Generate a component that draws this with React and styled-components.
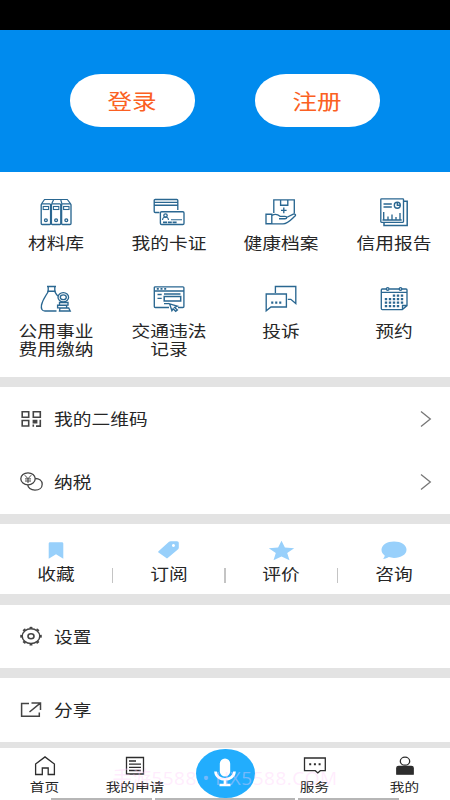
import React from "react";
import styled, { createGlobalStyle } from "styled-components";

const GlobalStyle = createGlobalStyle`
  * {
    box-sizing: border-box;
  }

  body {
    margin: 0;
    background: #fff;
    font-family: "Noto Sans CJK SC", sans-serif;
    color: #262626;
  }
`;

const Page = styled.div`
  display: flex;
  flex-direction: column;
  width: 450px;
  height: 800px;
  overflow: hidden;
  background: #e3e3e3;
`;

const StatusBar = styled.div`
  height: 29.5px;
  flex: none;
  background: #000;
`;

const Header = styled.header`
  display: flex;
  justify-content: center;
  gap: 60px;
  height: 142px;
  flex: none;
  padding-top: 44.5px;
  background: #008bee;
`;

// Wide lettering used all over the page
const Label = styled.span`
  display: inline-block;
  font-size: ${(p) => p.$size || 16}px;
  line-height: ${(p) => p.$line || 18.5}px;
  font-weight: 400;
  white-space: pre;
  text-align: ${(p) => (p.$left ? "left" : "center")};
  transform: scaleX(1.17);
  transform-origin: ${(p) => (p.$left ? "left" : "center")};
`;

const PillButton = styled.button`
  width: 125px;
  height: 52.5px;
  padding: 0 1px 1px 0;
  border: 0;
  border-radius: 31px / 26px;
  background: #fff;
  color: #fb6022;
  font-family: inherit;
`;

const Panel = styled.section`
  flex: none;
  height: ${(p) => p.$height}px;
  margin-bottom: ${(p) => p.$gap || 10.5}px;
  background: #fff;
`;

const ServiceGrid = styled(Panel)`
  display: grid;
  grid-template-columns: repeat(4, 1fr);
  grid-template-rows: 87.5px 1fr;
  padding-top: 25.5px;
`;

const Service = styled.div`
  display: flex;
  flex-direction: column;
  align-items: center;
  gap: 6px;
`;

const Svg = styled.svg`
  display: block;
  flex: none;
  overflow: visible;
  fill: none;
  stroke: ${(p) => p.$color || "#2a6791"};
  stroke-width: ${(p) => p.$stroke || 1.35};
`;

const MenuRow = styled.div`
  display: flex;
  align-items: center;
  height: 63px;
  padding: 0 19px 0 20px;
`;

const MenuIcon = styled.div`
  width: 33.5px;
`;

const Chevron = styled(Svg)`
  margin-left: auto;
`;

const StatRow = styled(Panel)`
  display: grid;
  grid-template-columns: repeat(4, 1fr);
`;

const Stat = styled.div`
  position: relative;
  display: flex;
  flex-direction: column;
  align-items: center;
  padding-top: 16px;
  gap: 2.5px;

  &:not(:last-child)::after {
    content: "";
    position: absolute;
    right: -0.5px;
    top: 44px;
    width: 1.5px;
    height: 15px;
    background: #c4c4c4;
  }
`;

const BottomNav = styled.nav`
  position: relative;
  display: grid;
  grid-template-columns: repeat(5, 1fr);
  height: 52px;
  flex: none;
  background: #fff;
`;

const NavItem = styled.div`
  display: flex;
  flex-direction: column;
  align-items: center;
  padding-top: 7.5px;
  gap: 3px;
`;

const MicButton = styled.div`
  display: flex;
  align-items: center;
  justify-content: center;
  justify-self: center;
  width: 59px;
  height: 49.5px;
  margin-top: 0.5px;
  border-radius: 50%;
  background: #22adfd;
`;

const Watermark = styled.div`
  position: absolute;
  left: 0;
  right: 0;
  top: 17px;
  text-align: center;
  white-space: nowrap;
  font-family: "Open Sans", "Noto Sans CJK SC", sans-serif;
  font-size: 19px;
  line-height: 26px;
  letter-spacing: 0.5px;
  color: rgba(255, 205, 250, 0.38);
`;

const Strips = styled.div`
  position: absolute;
  left: 51px;
  bottom: 0;
  display: flex;
  gap: 3px;
`;

const Strip = styled.i`
  width: ${(p) => p.$width}px;
  height: 2px;
  background: #b6b6b6;
`;

const calendarDots = [];
[10.7, 14.2, 17.7, 21.2].forEach((y, row) => {
  [9, 13, 17, 21, 25].forEach((x, col) => {
    if ((row === 0 && col < 2) || (row === 3 && col === 4)) return;
    calendarDots.push(`M${x - 1.2} ${y}h2.4`);
  });
});

const icons = {
  binders: (
    <>
      {[2.2, 12.4, 22.6].map((x) => (
        <g key={x}>
          <rect x={x} y="6.8" width="9.4" height="20.7" rx="1" />
          <rect x={x + 2} y="9.5" width="5.4" height="3" strokeWidth="1.1" />
          <circle cx={x + 4.7} cy="23.2" r="1.4" />
        </g>
      ))}
      <path d="M2.5 6.8L5.5 2.5h22.8l3.4 4.3M12.7 6.8l2-4.3M22.9 6.8l-1.2-4.3" strokeWidth="1.2" />
    </>
  ),
  cards: (
    <>
      <path d="M7.5 15.5H3.2a1 1 0 0 1-1-1V3.5a1 1 0 0 1 1-1h21.6a1 1 0 0 1 1 1V13M2.2 5.3h23.6M2.2 8.2h23.6" />
      <rect x="8.4" y="14.7" width="23.6" height="12.8" rx="1.2" />
      <circle cx="13.5" cy="18.5" r="1.7" />
      <path d="M10.5 23c.3-4 5.7-4 6 0M19 22.8h11" strokeWidth="1.1" strokeDasharray="12 0" />
      <path d="M11 25.3h14" strokeDasharray="4 .8" strokeWidth="1.7" />
    </>
  ),
  health: (
    <>
      <path d="M9.8 16V2.8h20.5v13.7M16.6 2.8v5.4h7.2V2.8M17 13.3h5.6M19.8 10.4v5.8" />
      <path d="M2 17.2h5.8v9.5H2zM8 18.3c3-1.5 5.5-1.2 8 1h5c2.3 0 2.3 2.4 0 2.4h-6M22.5 20.5l6.8-3.4c1.5-.6 3 .8 1.8 1.8-4 3.7-7.3 8-12 8H8" />
    </>
  ),
  report: (
    <>
      <path d="M27 4.2h3.2v24.2H7v-2.7" strokeWidth="1.5" />
      <rect x="3.8" y="1.8" width="22.7" height="23.5" rx=".7" />
      <path d="M6.5 7h8.3M6.5 10h8.3" />
      <circle cx="20.3" cy="8.2" r="3" />
      <path d="M20.3 5v3.2h3M6.7 15v8M11 23v-3.5M15 23v-5.5M19 23v-3M23 23v-7M5.5 23h19.2" />
    </>
  ),
  bag: (
    <>
      <path d="M8 1.5h9M9.2 1.5v4.7M15.8 1.5v4.7M8.2 6.2h8.6" />
      <path d="M9.2 6.5C7.5 10 3.8 14 2.5 20c-.7 4 .6 6 3.5 6h11.5M15.8 6.5c.7 1.7 1.8 3.2 3 4.7" />
      <ellipse cx="24.3" cy="12.2" rx="5.3" ry="4.6" />
      <ellipse cx="24.3" cy="12.2" rx="3" ry="2.4" />
      <path d="M20.5 17.5h8.5v2.6h-8.5zM18.6 20.2h9v2.7h-9zM21 23h8.7l1.5 3H20.5z" />
    </>
  ),
  browser: (
    <>
      <path d="M17 22.5H3.3a1 1 0 0 1-1-1V2.8a1 1 0 0 1 1-1h27.6a1 1 0 0 1 1 1v18.7a1 1 0 0 1-1 1H26M2.3 6h29.6" />
      <path d="M4.8 3.9h2M8.5 3.9h2M12.2 3.9h2" strokeWidth="1.7" />
      <path d="M5.5 9.5h4.2M5.5 13.3h4.2M12 9h16.5M12 18.6h5" />
      <path d="M12.2 11.5h16.5V16H12.2z" strokeWidth="1.5" />
      <path d="M17.6 18.8l7.7 2.4-2.7 1.2 2.8 2.5-1.7 1.4-2.6-2.5-1.2 1.9z" fill="#fff" />
    </>
  ),
  chat: (
    <>
      <path d="M11.4 8V1.5h20.4v17l-5-4.2h-3" />
      <path d="M2.2 9h20.2v13H7l-4.8 3.8z" />
      <path d="M7.2 17.7h2.1M11.2 17.7h2.1M15.2 17.7h2.1" strokeWidth="2.2" />
    </>
  ),
  calendar: (
    <>
      <path d="M12.2 4h9.8M9.2 4H5.3a1 1 0 0 0-1 1v18.6a1 1 0 0 0 1 1h20l4.7-4V5a1 1 0 0 0-1-1h-4M4.3 7.3H30M25.5 24v-3.5H30" />
      <circle cx="10.7" cy="3.9" r="1.3" />
      <circle cx="23.5" cy="3.9" r="1.3" />
      <path d={calendarDots.join("")} strokeWidth="2.2" />
    </>
  ),
};

const services = [
  { icon: "binders", label: "材料库" },
  { icon: "cards", label: "我的卡证" },
  { icon: "health", label: "健康档案" },
  { icon: "report", label: "信用报告" },
  { icon: "bag", label: "公用事业\n费用缴纳" },
  { icon: "browser", label: "交通违法\n记录" },
  { icon: "chat", label: "投诉" },
  { icon: "calendar", label: "预约" },
];

const QrIcon = () => (
  <Svg width="23" height="18" $color="#444" $stroke="1.6">
    <path d="M2.2 1.8h6.5v5.4H2.2zM13.3 1.8h7v5.4h-7zM2.2 10.5h6.5V16H2.2z" />
    <path d="M13.3 16.8v-2.4M16 16.1h4.3V9.7" />
    <path d="M12.6 9.8h4.8v3.6h-4.8z" fill="#444" stroke="none" />
  </Svg>
);

const TaxIcon = () => (
  <Svg width="23" height="19" $color="#444" $stroke="1.3">
    <ellipse cx="8" cy="6.8" rx="7.2" ry="6" />
    <path d="M15.2 6.5c4 0 7 2.3 7 5.7 0 3.5-3 5.9-7.2 5.9s-7.2-2.3-7.2-5.3" />
    <path d="M4.8 3.2L8 6.7l3.2-3.5M8 6.7v4.4M5 6.9h6M5 9h6" strokeWidth="1" />
  </Svg>
);

const GearIcon = () => (
  <Svg width="23" height="19" $color="#444">
    <ellipse cx="11" cy="9.2" rx="8.8" ry="7.4" strokeWidth="1.5" />
    <ellipse cx="11" cy="9.2" rx="9.9" ry="8.5" strokeWidth="1.8" pathLength="80" strokeDasharray="4 6" strokeDashoffset="2" />
    <ellipse cx="11" cy="9.2" rx="3" ry="2.5" strokeWidth="1.6" />
  </Svg>
);

const ShareIcon = () => (
  <Svg width="23" height="18" $color="#444" $stroke="1.5">
    <path d="M9 2.6H1.6V15.2h17.7v-3.8M11.5 2h9v7M20.3 2.2L9.5 11" />
  </Svg>
);

const MenuItem = ({ icon, label, arrow }) => (
  <MenuRow>
    <MenuIcon>{icon}</MenuIcon>
    <Label $left>{label}</Label>
    {arrow && (
      <Chevron width="11" height="18" $color="#777" $stroke="1.3">
        <path d="M1 1.5L10.3 9 1 16.5" />
      </Chevron>
    )}
  </MenuRow>
);

const stats = [
  { label: "收藏", shape: <path d="M5.7 3.4q0-1.2 1.3-1.2h11.9q1.4 0 1.4 1.2v15.4L13 14.3l-7.3 4.5z" /> },
  {
    label: "订阅",
    shape: (
      <path
        fillRule="evenodd"
        d="M3.5 11.2L14 1.8q.7-.6 1.7-.6H22q1.8 0 1.8 1.5v5q0 .8-.7 1.5L12.7 18.1q-.7.6-1.4 0L3.5 12.6q-.9-.7 0-1.4zM18.4 4.1a1.5 1.4 0 1 0 .1 0z"
      />
    ),
  },
  { label: "评价", shape: <path d="M13.5.7l3.4 6.8 9.3.8-7 4.6 2.3 7.4-8-3.7-8 3.7 2.3-7.4-7-4.6 9.3-.8z" /> },
  {
    label: "咨询",
    shape: <path d="M14 1.5c7 0 12.5 3.5 12.5 8.2s-5.5 8.2-12.5 8.2c-2 0-3.6-.3-5.2-.8C6.8 18.6 4.5 19 2.7 18.8c1.3-1 2-2.1 2-3.4C2.7 14 1.5 12 1.5 9.7c0-4.7 5.5-8.2 12.5-8.2z" />,
  },
];

const NavIcon = ({ children }) => (
  <Svg width="24" height="20" $color="#2d2d2d" $stroke="1.3">
    {children}
  </Svg>
);

function App() {
  return (
    <>
      <GlobalStyle />
      <Page>
        <StatusBar />
        <Header>
          <PillButton><Label $size={21} $line={30}>登录</Label></PillButton>
          <PillButton><Label $size={21} $line={30}>注册</Label></PillButton>
        </Header>

        <ServiceGrid $height={205}>
          {services.map((item) => (
            <Service key={item.label}>
              <Svg width="34" height="30">{icons[item.icon]}</Svg>
              <Label>{item.label}</Label>
            </Service>
          ))}
        </ServiceGrid>

        <Panel $height={126.5}>
          <MenuItem icon={<QrIcon />} label="我的二维码" arrow />
          <MenuItem icon={<TaxIcon />} label="纳税" arrow />
        </Panel>

        <StatRow $height={70}>
          {stats.map(({ label, shape }) => (
            <Stat key={label}>
              <Svg width="27" height="21">
                <g fill="#98d0fb" stroke="none">{shape}</g>
              </Svg>
              <Label>{label}</Label>
            </Stat>
          ))}
        </StatRow>

        <Panel $height={63.5} $gap={10}>
          <MenuItem icon={<GearIcon />} label="设置" />
        </Panel>
        <Panel $height={63.5} $gap={6.5}>
          <MenuItem icon={<ShareIcon />} label="分享" />
        </Panel>

        <BottomNav>
          <NavItem>
            <NavIcon>
              <path d="M2.6 8L12 .9 21.4 8v10.5h-6.2V12H9.3v6.5H2.6z" />
            </NavIcon>
            <Label $size={12.5} $line={15}>首页</Label>
          </NavItem>
          <NavItem>
            <NavIcon>
              <path d="M3.5 1.5h17v16.5h-17zM6 5h7M6 8.2h12M6 11.3h12M6 14.5h12" />
            </NavIcon>
            <Label $size={12.5} $line={15}>我的申请</Label>
          </NavItem>
          <MicButton>
            <Svg width="26" height="32" $color="#fff" $stroke="2.7">
              <rect x="7.8" y="1.5" width="10.4" height="18" rx="5.2" fill="#fff" stroke="none" />
              <path d="M3.5 14.5c.7 10.5 18.3 10.5 19 0M13 22.5v5M7.5 28h11" />
            </Svg>
          </MicButton>
          <NavItem>
            <NavIcon>
              <path d="M1.5 2h20.8v12.7h-5l-2.5 2.2-2.5-2.2H1.5z" />
              <path d="M6.2 8.3h2M10.9 8.3h2M15.6 8.3h2" strokeWidth="2" />
            </NavIcon>
            <Label $size={12.5} $line={15}>服务</Label>
          </NavItem>
          <NavItem>
            <NavIcon>
              <ellipse cx="12" cy="5.2" rx="4.7" ry="4" />
              <path d="M3.8 18.2v-6q0-1.8 2-1.8h12.4q2 0 2 1.8v6z" fill="#2d2d2d" />
            </NavIcon>
            <Label $size={12.5} $line={15}>我的</Label>
          </NavItem>
          <Watermark>手游5588 • HX5588.COM</Watermark>
          <Strips>
            <Strip $width={101} />
            <Strip $width={140} />
            <Strip $width={101} />
          </Strips>
        </BottomNav>
      </Page>
    </>
  );
}

export default App;
